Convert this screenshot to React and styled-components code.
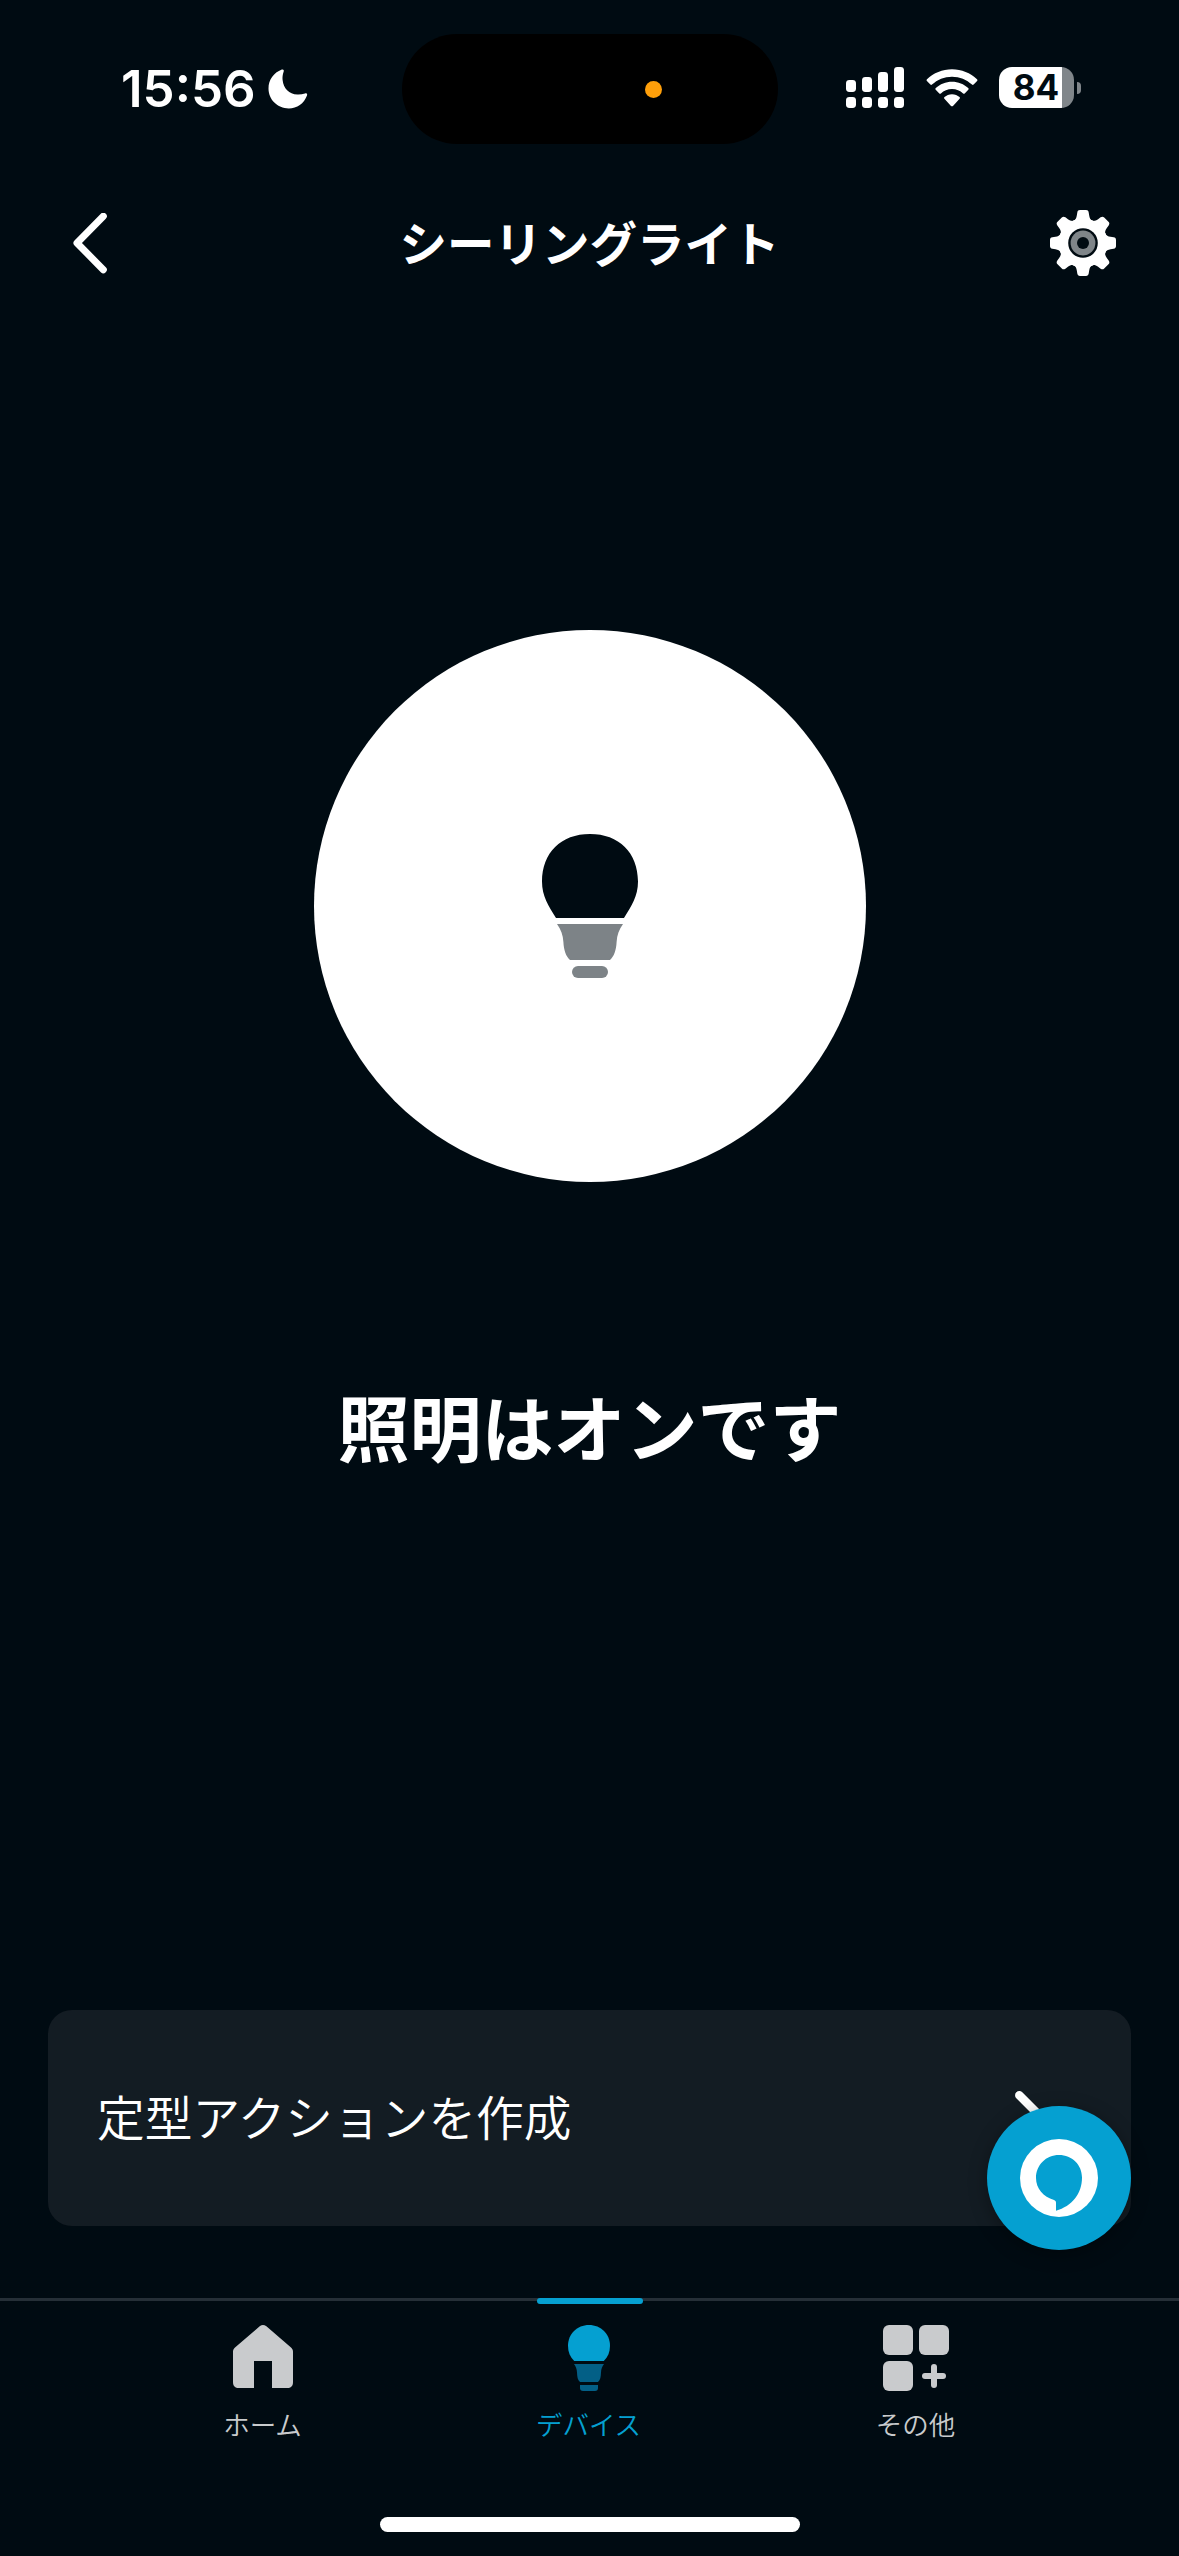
import React from "react";
import styled, { createGlobalStyle } from "styled-components";

const BG = "#000b12";
const BLUE = "#05a0d1";

const TEETH = [0, 45, 90, 135, 180, 225, 270, 315];

const tabs = [
  { id: "home", label: "ホーム", Icon: HomeIcon },
  { id: "devices", label: "デバイス", Icon: DeviceIcon, active: true },
  { id: "more", label: "その他", Icon: MoreIcon },
];

function MoonIcon() {
  return (
    <svg width="40" height="40" viewBox="0 0 40 40">
      <path
        d="M13.8 0.6C15.2 0 16.2 1 15.7 2.4C14.6 5.5 14.3 8.2 14.6 11C15.4 19.4 21 25.2 29.4 25.6C32 25.7 34.6 25.4 37 24.5C38.6 23.9 39.6 24.8 39 26.4C36 34.4 29 39.4 20.8 39.4C9.4 39.4 0.5 30.8 0.5 19.6C0.5 11 5.6 3.8 13.8 0.6Z"
        fill="#fff"
      />
    </svg>
  );
}

function SignalIcon() {
  const bars = [
    { x: 0, y: 13 },
    { x: 16, y: 10 },
    { x: 32, y: 5 },
    { x: 48, y: 0 },
  ];
  return (
    <svg width="58" height="41" viewBox="0 0 58 41" fill="#fff">
      {bars.map(({ x, y }) => (
        <g key={x}>
          <rect x={x} y={y} width="10" height={25 - y} rx="3.4" />
          <rect x={x} y="30" width="10" height="11" rx="3.4" />
        </g>
      ))}
    </svg>
  );
}

function WifiIcon() {
  return (
    <svg width="52" height="38" viewBox="0 0 52 38" fill="#fff">
      <path d="M26 0.3C35.6 0.3 44.4 4 51 10.2C51.6 10.8 51.6 11.4 51.1 12L47.6 15.6C47.1 16.1 46.5 16.1 46 15.6C40.7 10.7 33.7 7.7 26 7.7C18.3 7.7 11.3 10.7 6 15.6C5.5 16.1 4.9 16.1 4.4 15.6L0.9 12C0.4 11.4 0.4 10.8 1 10.2C7.6 4 16.4 0.3 26 0.3Z" />
      <path d="M26 12.7C32.2 12.7 37.9 15.1 42.2 19C42.8 19.5 42.8 20.2 42.3 20.7L38.7 24.4C38.2 24.9 37.6 24.9 37.1 24.4C34.2 21.7 30.3 20.1 26 20.1C21.7 20.1 17.8 21.7 14.9 24.4C14.4 24.9 13.8 24.9 13.3 24.4L9.7 20.7C9.2 20.2 9.2 19.5 9.8 19C14.1 15.1 19.8 12.7 26 12.7Z" />
      <path d="M26 25.3C28.9 25.3 31.5 26.4 33.5 28.1C34.1 28.6 34.1 29.3 33.6 29.8L27 36.9C26.4 37.5 25.6 37.5 25 36.9L18.4 29.8C17.9 29.3 17.9 28.6 18.5 28.1C20.5 26.4 23.1 25.3 26 25.3Z" />
    </svg>
  );
}

function GearIcon() {
  return (
    <svg width="66" height="66" viewBox="-33 -33 66 66">
      <circle r="24.5" fill="#fff" />
      {TEETH.map((angle) => (
        <path
          key={angle}
          transform={`rotate(${angle})`}
          d="M-9.5 -22C-7.4 -23.4 -6.6 -25 -6.2 -27.5L-5.7 -30.6C-5.4 -32.3 -4.6 -33 -3 -33H3C4.6 -33 5.4 -32.3 5.7 -30.6L6.2 -27.5C6.6 -25 7.4 -23.4 9.5 -22Z"
          fill="#fff"
        />
      ))}
      <circle r="14.8" fill={BG} />
      <circle r="12.4" fill="#7f8589" />
      <circle r="6" fill={BG} />
    </svg>
  );
}

function BulbIcon() {
  return (
    <svg width="96" height="144" viewBox="0 0 96 144">
      <path
        d="M48 0C77 0 96 18.6 96 47.5C96 62 89.5 72 82 84H14C6.5 72 0 62 0 47.5C0 18.6 19 0 48 0Z"
        fill={BG}
      />
      <path
        d="M15 90H81C77 95.5 75 101 74.6 108C74.2 116 72 122.5 68 126H28C24 122.5 21.8 116 21.4 108C21 101 19 95.5 15 90Z"
        fill="#7d8387"
      />
      <rect x="30" y="132" width="36" height="12" rx="6" fill="#7d8387" />
    </svg>
  );
}

function HomeIcon() {
  return (
    <svg width="60" height="66" viewBox="0 0 60 66">
      <path
        d="M27 1C29 -0.3 31 -0.3 33.4 1.2L58 22.6C59.4 23.9 60 25 60 26.8V57C60 61 58 63 54 63H39V36H21V63H6C2 63 0 61 0 57V26.8C0 25 0.6 23.9 2 22.6Z"
        fill="#c9cbcd"
      />
    </svg>
  );
}

function DeviceIcon() {
  return (
    <svg width="42" height="66" viewBox="0 0 42 66">
      <path
        d="M21 0C33 0 42 9 42 20.8C42 27 40 32 35.8 36H6.2C2 32 0 27 0 20.8C0 9 9 0 21 0Z"
        fill={BLUE}
      />
      <path
        d="M6 39H36C34 42 33.2 44 33 47.5C32.8 52 32.4 55 30 57H12C9.6 55 9.2 52 9 47.5C8.8 44 8 42 6 39Z"
        fill="#035f86"
      />
      <path
        d="M12 60H30V63C30 65 29 66 27 66H15C13 66 12 65 12 63Z"
        fill="#035f86"
      />
    </svg>
  );
}

function MoreIcon() {
  return (
    <svg width="66" height="66" viewBox="0 0 66 66" fill="#c9cbcd">
      <rect width="30" height="30" rx="6" />
      <rect x="36" width="30" height="30" rx="6" />
      <rect y="36" width="30" height="30" rx="6" />
      <rect x="39" y="48" width="24" height="6" rx="3" />
      <rect x="48" y="39" width="6" height="24" rx="3" />
    </svg>
  );
}

function AlexaIcon() {
  return (
    <svg width="78" height="78" viewBox="0 0 78 78">
      <circle cx="39" cy="39" r="39" fill="#fff" />
      <path
        d="M39 16C52 16 62 25.8 62 38.5C62 55 52 67 36 71.8V63.8C36 62.4 35.2 61.4 34 61C23.4 58 16 49.5 16 39C16 26 26 16 39 16Z"
        fill={BLUE}
      />
    </svg>
  );
}

function App() {
  return (
    <>
      <GlobalStyle />
      <Screen>
        <StatusBar>
          <Clock>
            <span>15:56</span>
            <MoonIcon />
          </Clock>
          <Island>
            <MicDot />
          </Island>
          <Indicators>
            <SignalIcon />
            <WifiIcon />
            <Battery>
              <BatteryBody>84</BatteryBody>
              <BatteryTip />
            </Battery>
          </Indicators>
        </StatusBar>

        <Header>
          <IconButton aria-label="戻る">
            <svg width="34" height="61" viewBox="0 0 34 61">
              <path
                d="M30.3 3.3L4 30L30.3 56.7"
                fill="none"
                stroke="#fff"
                strokeWidth="7"
                strokeLinecap="round"
                strokeLinejoin="round"
              />
            </svg>
          </IconButton>
          <Title>シーリングライト</Title>
          <IconButton aria-label="設定">
            <GearIcon />
          </IconButton>
        </Header>

        <Main>
          <PowerButton aria-label="照明">
            <BulbIcon />
          </PowerButton>
          <Status>照明はオンです</Status>
        </Main>

        <Card>
          <CardLabel>定型アクションを作成</CardLabel>
          <svg width="32" height="54" viewBox="0 0 32 54">
            <path
              d="M4.3 4.3L27 27L4.3 49.7"
              fill="none"
              stroke="#fff"
              strokeWidth="8.5"
              strokeLinecap="round"
              strokeLinejoin="round"
            />
          </svg>
          <AlexaButton aria-label="Alexa">
            <AlexaIcon />
          </AlexaButton>
        </Card>

        <TabBar>
          {tabs.map(({ id, label, Icon, active }) => (
            <Tab key={id} $active={active}>
              <TabMarker $active={active} />
              <Icon />
              <span>{label}</span>
            </Tab>
          ))}
        </TabBar>
        <HomeBar />
      </Screen>
    </>
  );
}

const GlobalStyle = createGlobalStyle`
  * {
    box-sizing: border-box;
  }
  body {
    margin: 0;
    background: ${BG};
  }
  svg {
    display: block;
    flex-shrink: 0;
  }
  button {
    border: none;
    padding: 0;
    background: none;
    font: inherit;
    cursor: pointer;
  }
`;

const Screen = styled.div`
  width: 1179px;
  height: 2556px;
  display: flex;
  flex-direction: column;
  overflow: hidden;
  background: ${BG};
  color: #fff;
  font-family: "Noto Sans CJK JP", sans-serif;
`;

const StatusBar = styled.div`
  height: 178px;
  padding: 34px 98px 34px 121px;
  display: grid;
  grid-template-columns: 281px 376px 1fr;
`;

const Clock = styled.div`
  height: 109px;
  display: flex;
  align-items: center;
  gap: 12px;
  font-family: Inter, sans-serif;
  font-size: 51px;
  font-weight: 600;
  line-height: 50px;
`;

const Island = styled.div`
  height: 110px;
  border-radius: 55px;
  background: #000;
  display: flex;
  align-items: center;
  padding-left: 243px;
`;

const MicDot = styled.div`
  width: 17px;
  height: 17px;
  border-radius: 50%;
  background: #ff9f0a;
`;

const Indicators = styled.div`
  height: 41px;
  margin-top: 33px;
  display: flex;
  align-items: center;
  justify-content: flex-end;
  gap: 21.5px;
`;

const Battery = styled.div`
  display: flex;
  align-items: center;
  gap: 3px;
`;

const BatteryBody = styled.div`
  width: 75px;
  height: 41px;
  border-radius: 13px;
  padding-right: 1px;
  background: linear-gradient(90deg, #fff 63px, #80868a 63px);
  display: flex;
  align-items: center;
  justify-content: center;
  color: ${BG};
  font-family: Inter, sans-serif;
  font-size: 35px;
  font-weight: 700;
  line-height: 1;
`;

const BatteryTip = styled.div`
  width: 4px;
  height: 12px;
  border-radius: 0 4px 4px 0;
  background: #80868a;
`;

const Header = styled.header`
  height: 130px;
  padding: 0 63px 0 73px;
  display: flex;
  align-items: center;
  justify-content: space-between;
`;

const IconButton = styled.button`
  display: flex;
  align-items: center;
  width: 66px;
  height: 66px;
`;

const Title = styled.h1`
  margin: 0;
  padding: 0 10px 2px 0;
  font-size: 47.5px;
  font-weight: 700;
  line-height: 66px;
`;

const Main = styled.main`
  height: 1702px;
  padding-top: 322px;
  display: flex;
  flex-direction: column;
  align-items: center;
`;

const PowerButton = styled.button`
  width: 552px;
  height: 552px;
  border-radius: 50%;
  background: #fff;
  display: flex;
  align-items: center;
  justify-content: center;
`;

const Status = styled.h2`
  margin: 191px 0 0;
  font-size: 72px;
  font-weight: 700;
  line-height: 104px;
`;

const Card = styled.section`
  position: relative;
  height: 216px;
  margin: 0 48px 72px;
  padding: 0 84px 0 49px;
  border-radius: 24px;
  background: #131c23;
  display: flex;
  align-items: center;
  justify-content: space-between;
`;

const CardLabel = styled.span`
  padding-bottom: 5px;
  font-size: 47.7px;
  font-weight: 350;
`;

const AlexaButton = styled.button`
  position: absolute;
  right: 0;
  bottom: -24px;
  width: 144px;
  height: 144px;
  border-radius: 50%;
  background: ${BLUE};
  box-shadow: 0 4px 18px rgba(0, 0, 0, 0.35);
  display: flex;
  align-items: center;
  justify-content: center;
`;

const TabBar = styled.nav`
  height: 219px;
  padding-left: 100px;
  border-top: 3px solid #252f37;
  display: grid;
  grid-template-columns: 326px 326px 328px;
`;

const Tab = styled.div`
  display: flex;
  flex-direction: column;
  align-items: center;
  color: ${(props) => (props.$active ? BLUE : "#c9cbcd")};
  font-size: 26.5px;
  font-weight: 350;
  line-height: 40px;
  span {
    margin: 13px 1px 0 0;
  }
`;

const TabMarker = styled.div`
  width: 106px;
  height: 6px;
  margin: -3px 0 21px 2px;
  border-radius: 3px;
  background: ${(props) => (props.$active ? BLUE : "transparent")};
`;

const HomeBar = styled.div`
  width: 420px;
  height: 15px;
  margin: 0 auto;
  border-radius: 8px;
  background: #fff;
`;

export default App;
